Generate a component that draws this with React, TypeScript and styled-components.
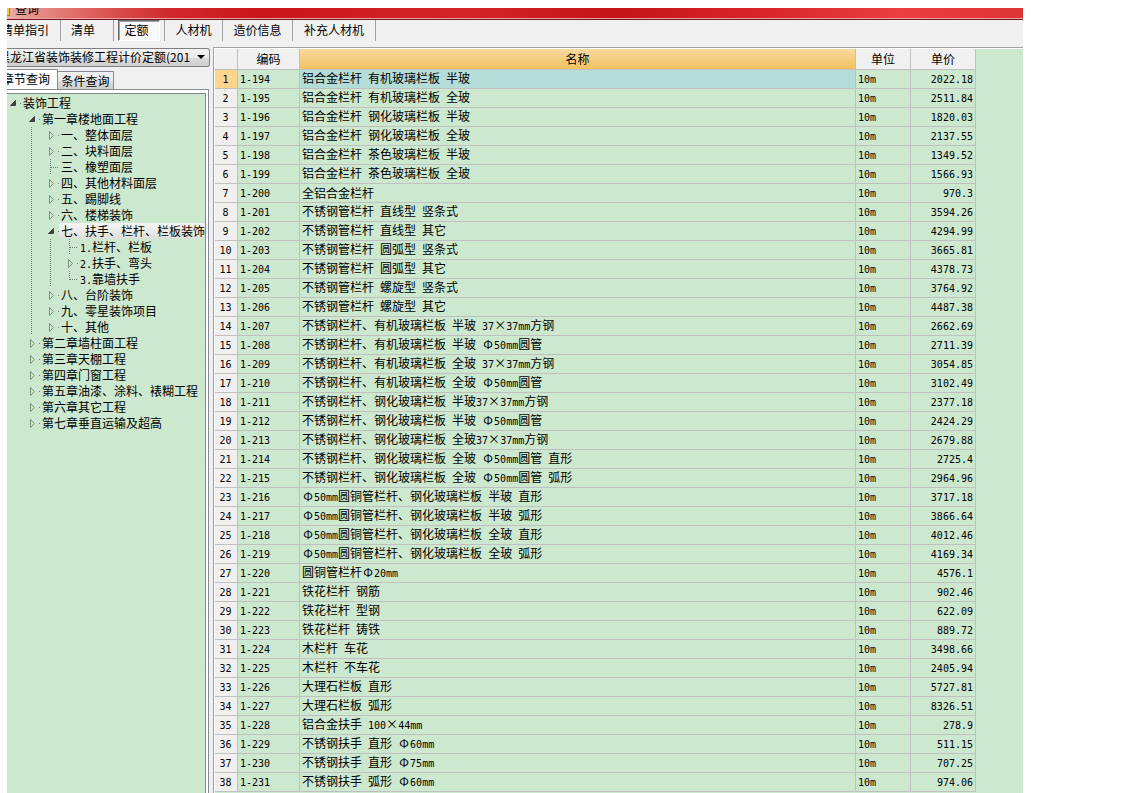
import React from 'react';
import styled, { createGlobalStyle, css } from 'styled-components';

const Global = createGlobalStyle`
  * { box-sizing: border-box; }
  html, body { margin: 0; background: #fff; }
  body, button, select {
    font-family: 'Noto Sans CJK SC', sans-serif;
    font-size: 12px;
    line-height: 16px;
    color: #000;
  }
`;

const Window = styled.div`
  margin: 8px 99px 0 7px;
  height: calc(100vh - 8px);
  min-width: 600px;
  display: flex;
  flex-direction: column;
  overflow: hidden;
  background: #f0f0f0;
`;

const TitleBar = styled.header`
  height: 12px;
  flex: none;
  display: flex;
  align-items: flex-end;
  gap: 5px;
  overflow: hidden;
  background: linear-gradient(90deg, #e8b0a8 0, #e58d86 3%, #dc5a58 9%, #d0282c 16%, #c9161c 25%, #d3242a 45%, #c4141a 60%, #d8262c 75%, #e93f42 88%, #dd3438 100%);
  border-bottom: 1px solid #701820;
  box-shadow: inset 0 -1px #f0a0a0;
`;

const TitleIcon = styled.span`
  width: 3px;
  height: 8px;
  margin-bottom: 3px;
  background: #f5d020;
  border-right: 1px solid #b08010;
  border-bottom: 1px solid #b08010;
`;

const Title = styled.h1`
  margin: 0 0 2px;
  font-size: 12px;
  font-weight: 400;
  line-height: 16px;
`;

const Toolbar = styled.nav`
  height: 27px;
  flex: none;
  display: flex;
  align-items: flex-start;
`;

const ToolCell = styled.div<{ $width: number; $end?: number }>`
  width: ${(p) => p.$width}px;
  height: 21px;
  flex: none;
  display: flex;
  justify-content: ${(p) => (p.$end ? 'flex-end' : 'center')};
  padding-right: ${(p) => p.$end ?? 0}px;
  border-right: 1px solid #a0a0a0;
  overflow: hidden;
`;

const ToolButton = styled.button<{ $active?: boolean }>`
  flex: none;
  height: 21px;
  padding: 0 5px 2px;
  border: 1px solid transparent;
  background: none;
  white-space: nowrap;
  ${(p) =>
    p.$active &&
    css`
      background: #f8f8f8;
      border-color: #696969 #fff #fff #696969;
      box-shadow: inset 1px 1px #a0a0a0;
      padding: 0 10px 2px 5px;
    `}
`;

const Body = styled.div`
  flex: 1;
  min-height: 0;
  display: flex;
`;

const Sidebar = styled.aside`
  width: 206px;
  flex: none;
  display: flex;
  flex-direction: column;
  padding-right: 3px;
`;

const LibraryPicker = styled.div`
  height: 20px;
  flex: none;
  display: grid;
  align-items: center;
  > * { grid-area: 1 / 1; }
  > svg { justify-self: end; margin-right: 5px; pointer-events: none; }
`;

const Select = styled.select`
  appearance: none;
  width: 100%;
  height: 19px;
  padding: 0 16px 0 0;
  text-indent: -9px;
  border: 1px solid #808080;
  border-left: 0;
  border-radius: 0 3px 3px 0;
  background: linear-gradient(#f4f4f4, #ebebeb 50%, #dddddd 50%, #cfcfcf);
`;

const Tabs = styled.div`
  height: 22px;
  flex: none;
  display: flex;
  align-items: flex-end;
`;

const Tab = styled.button<{ $active?: boolean }>`
  height: ${(p) => (p.$active ? 20 : 18)}px;
  width: ${(p) => (p.$active ? 51 : 56)}px;
  flex: none;
  display: flex;
  justify-content: ${(p) => (p.$active ? 'flex-end' : 'center')};
  padding: ${(p) => (p.$active ? '1px 7px 0 0' : '1px 0 0')};
  white-space: nowrap;
  overflow: hidden;
  border: 1px solid #898c95;
  border-bottom: 0;
  border-left-width: 0;
  background: ${(p) => (p.$active ? '#fff' : 'linear-gradient(#f2f2f2, #ebebeb 50%, #dddddd 50%, #cfcfcf)')};
`;

const TreePanel = styled.div`
  flex: 1;
  min-height: 0;
  display: flex;
  margin-right: 1px;
  padding: 3px 2px 0 0;
  background: #fff;
  border-top: 1px solid #898c95;
  border-right: 1px solid #898c95;
`;

const Tree = styled.ul`
  flex: 1;
  min-width: 0;
  margin: 0;
  padding: 1px 0 0;
  list-style: none;
  overflow: hidden;
  background: #cce8cf;
  border-top: 1px solid #828790;
  border-right: 1px solid #828790;
`;

const TreeRow = styled.li`
  height: 16px;
  display: flex;
  align-items: center;
  white-space: nowrap;
`;

const TreeLabel = styled.span<{ $selected?: boolean }>`
  height: 16px;
  padding: 0 2px;
  ${(p) =>
    p.$selected &&
    css`
      flex: 1;
      min-width: 0;
      overflow: hidden;
      border-radius: 2px;
      background: linear-gradient(#f4f6f4, #dcdfdc);
    `}
`;

const Latin = styled.span`
  font-family: 'DejaVu Sans Mono', monospace;
  font-size: 10px;
  line-height: 12px;
  white-space: pre;
`;

const FullWidth = styled.span`
  display: inline-block;
  width: 12px;
  line-height: 12px;
  text-align: center;
`;

const Grid = styled.main`
  flex: 1;
  min-width: 0;
  display: flex;
  overflow: hidden;
  background: #cce8cf;
  border-top: 1px solid #a0a0a0;
  border-left: 1px solid #a0a0a0;
  box-shadow: inset 0 1px #fff, inset 1px 0 #fff;
  padding: 1px 47px 0 1px;
`;

const Table = styled.table`
  width: 100%;
  table-layout: fixed;
  border-collapse: separate;
  border-spacing: 0;
  align-self: flex-start;
`;

const HeadCell = styled.th<{ $active?: boolean }>`
  height: 21px;
  padding: 0;
  font-weight: 400;
  border-right: 1px solid #c0c0c0;
  border-bottom: 1px solid #c0c0c0;
  background: ${(p) => (p.$active ? 'linear-gradient(#f9d9a0, #f1c160)' : '#f0f0f0')};
`;

const RowHead = styled.th<{ $active?: boolean }>`
  height: 19px;
  padding: 0 1px 1px 0;
  font-weight: 400;
  line-height: 14px;
  border-right: 1px solid #c0c0c0;
  border-bottom: 1px solid #c0c0c0;
  background: ${(p) => (p.$active ? '#ffd58d' : '#f0f0f0')};
`;

const Cell = styled.td<{ $active?: boolean; $right?: boolean }>`
  height: 19px;
  padding: 0 2px 1px;
  line-height: 14px;
  text-align: ${(p) => (p.$right ? 'right' : 'left')};
  white-space: nowrap;
  overflow: hidden;
  border-right: 1px solid #c0c0c0;
  border-bottom: 1px solid #c0c0c0;
  background: ${(p) => (p.$active ? '#b4dcd8' : '#cce8cf')};
`;

/* Half-width runs are set in the monospaced face, full-width ones in the CJK face. */
const Mixed = ({ text }: { text: string }) => (
  <>
    {text.split(/([\x20-\x7e]+|Φ)/).map((run, i) => {
      if (run === 'Φ') return <FullWidth key={i}>{run}</FullWidth>;
      return i % 2 ? <Latin key={i}>{run}</Latin> : run;
    })}
  </>
);

type Mark = 'open' | 'closed' | 'leaf' | 'last';

/* depth, marker, label, columns of the guide lines that pass through the row */
const nodes: [number, Mark, string, number[]][] = [
  [0, 'open', '装饰工程', []],
  [1, 'open', '第一章楼地面工程', []],
  [2, 'closed', '一、整体面层', [1]],
  [2, 'closed', '二、块料面层', [1]],
  [2, 'leaf', '三、橡塑面层', [1]],
  [2, 'closed', '四、其他材料面层', [1]],
  [2, 'closed', '五、踢脚线', [1]],
  [2, 'closed', '六、楼梯装饰', [1]],
  [2, 'open', '七、扶手、栏杆、栏板装饰', [1]],
  [3, 'leaf', '1.栏杆、栏板', [1, 2]],
  [3, 'closed', '2.扶手、弯头', [1, 2]],
  [3, 'last', '3.靠墙扶手', [1, 2]],
  [2, 'closed', '八、台阶装饰', [1]],
  [2, 'closed', '九、零星装饰项目', [1]],
  [2, 'closed', '十、其他', [1]],
  [1, 'closed', '第二章墙柱面工程', []],
  [1, 'closed', '第三章天棚工程', []],
  [1, 'closed', '第四章门窗工程', []],
  [1, 'closed', '第五章油漆、涂料、裱糊工程', []],
  [1, 'closed', '第六章其它工程', []],
  [1, 'closed', '第七章垂直运输及超高', []],
];

const Guides = ({ depth, mark, lines }: { depth: number; mark: Mark; lines: number[] }) => {
  const x = depth * 19;
  return (
    <svg width={x + 14} height="16" shapeRendering="crispEdges" aria-hidden="true">
      <g stroke="#6f7f70" strokeDasharray="1 1" fill="none">
        {lines.map((l) => (
          <path key={l} d={`M${l * 19 + 5.5} 0V16`} />
        ))}
        {mark === 'leaf' && <path d={`M${x + 5.5} 0V16M${x + 6} 8.5H${x + 14}`} />}
        {mark === 'last' && <path d={`M${x + 5.5} 0V9M${x + 6} 8.5H${x + 14}`} />}
        {(mark === 'open' || mark === 'closed') && <path d={`M${x + 13} 8.5h1`} />}
      </g>
      <g shapeRendering="auto">
        {mark === 'open' && <path d={`M${x + 8.5} 5.5V10.5H${x + 3.5}Z`} fill="#404040" stroke="#404040" />}
        {mark === 'closed' && <path d={`M${x + 4.5} 4.5V12.5L${x + 8.5} 8.5Z`} fill="none" stroke="#7f8d81" />}
      </g>
    </svg>
  );
};

const rows: [string, string, string][] = [
  ['1-194', '铝合金栏杆 有机玻璃栏板 半玻', '2022.18'],
  ['1-195', '铝合金栏杆 有机玻璃栏板 全玻', '2511.84'],
  ['1-196', '铝合金栏杆 钢化玻璃栏板 半玻', '1820.03'],
  ['1-197', '铝合金栏杆 钢化玻璃栏板 全玻', '2137.55'],
  ['1-198', '铝合金栏杆 茶色玻璃栏板 半玻', '1349.52'],
  ['1-199', '铝合金栏杆 茶色玻璃栏板 全玻', '1566.93'],
  ['1-200', '全铝合金栏杆', '970.3'],
  ['1-201', '不锈钢管栏杆 直线型 竖条式', '3594.26'],
  ['1-202', '不锈钢管栏杆 直线型 其它', '4294.99'],
  ['1-203', '不锈钢管栏杆 圆弧型 竖条式', '3665.81'],
  ['1-204', '不锈钢管栏杆 圆弧型 其它', '4378.73'],
  ['1-205', '不锈钢管栏杆 螺旋型 竖条式', '3764.92'],
  ['1-206', '不锈钢管栏杆 螺旋型 其它', '4487.38'],
  ['1-207', '不锈钢栏杆、有机玻璃栏板 半玻 37×37mm方钢', '2662.69'],
  ['1-208', '不锈钢栏杆、有机玻璃栏板 半玻 Φ50mm圆管', '2711.39'],
  ['1-209', '不锈钢栏杆、有机玻璃栏板 全玻 37×37mm方钢', '3054.85'],
  ['1-210', '不锈钢栏杆、有机玻璃栏板 全玻 Φ50mm圆管', '3102.49'],
  ['1-211', '不锈钢栏杆、钢化玻璃栏板 半玻37×37mm方钢', '2377.18'],
  ['1-212', '不锈钢栏杆、钢化玻璃栏板 半玻 Φ50mm圆管', '2424.29'],
  ['1-213', '不锈钢栏杆、钢化玻璃栏板 全玻37×37mm方钢', '2679.88'],
  ['1-214', '不锈钢栏杆、钢化玻璃栏板 全玻 Φ50mm圆管 直形', '2725.4'],
  ['1-215', '不锈钢栏杆、钢化玻璃栏板 全玻 Φ50mm圆管 弧形', '2964.96'],
  ['1-216', 'Φ50mm圆铜管栏杆、钢化玻璃栏板 半玻 直形', '3717.18'],
  ['1-217', 'Φ50mm圆铜管栏杆、钢化玻璃栏板 半玻 弧形', '3866.64'],
  ['1-218', 'Φ50mm圆铜管栏杆、钢化玻璃栏板 全玻 直形', '4012.46'],
  ['1-219', 'Φ50mm圆铜管栏杆、钢化玻璃栏板 全玻 弧形', '4169.34'],
  ['1-220', '圆铜管栏杆Φ20mm', '4576.1'],
  ['1-221', '铁花栏杆 钢筋', '902.46'],
  ['1-222', '铁花栏杆 型钢', '622.09'],
  ['1-223', '铁花栏杆 铸铁', '889.72'],
  ['1-224', '木栏杆 车花', '3498.66'],
  ['1-225', '木栏杆 不车花', '2405.94'],
  ['1-226', '大理石栏板 直形', '5727.81'],
  ['1-227', '大理石栏板 弧形', '8326.51'],
  ['1-228', '铝合金扶手 100×44mm', '278.9'],
  ['1-229', '不锈钢扶手 直形 Φ60mm', '511.15'],
  ['1-230', '不锈钢扶手 直形 Φ75mm', '707.25'],
  ['1-231', '不锈钢扶手 弧形 Φ60mm', '974.06'],
];

/* name, width of its cell, gap on the right for the items that hug that side */
const tools: [string, number, number?][] = [
  ['清单指引', 54, 5],
  ['清单', 53, 12],
  ['定额', 51],
  ['人材机', 58],
  ['造价信息', 70],
  ['补充人材机', 83],
];

export default function App() {
  return (
    <>
      <Global />
      <Window>
        <TitleBar>
          <TitleIcon />
          <Title>查询</Title>
        </TitleBar>
        <Toolbar>
          {tools.map(([name, width, end]) => (
            <ToolCell key={name} $width={width} $end={end}>
              <ToolButton $active={name === '定额'}>{name}</ToolButton>
            </ToolCell>
          ))}
        </Toolbar>
        <Body>
          <Sidebar>
            <LibraryPicker>
              <Select aria-label="定额库">
                <option>黑龙江省装饰装修工程计价定额(201</option>
              </Select>
              <svg width="8" height="4" aria-hidden="true">
                <path d="M0 0H8L4 4Z" />
              </svg>
            </LibraryPicker>
            <Tabs>
              <Tab $active>章节查询</Tab>
              <Tab>条件查询</Tab>
            </Tabs>
            <TreePanel>
              <Tree>
                {nodes.map(([depth, mark, label, lines]) => (
                  <TreeRow key={label}>
                    <Guides depth={depth} mark={mark} lines={lines} />
                    <TreeLabel $selected={label.startsWith('七')}>
                      <Mixed text={label} />
                    </TreeLabel>
                  </TreeRow>
                ))}
              </Tree>
            </TreePanel>
          </Sidebar>
          <Grid>
            <Table>
              <colgroup>
                <col style={{ width: 23 }} />
                <col style={{ width: 62 }} />
                <col />
                <col style={{ width: 55 }} />
                <col style={{ width: 65 }} />
              </colgroup>
              <thead>
                <tr>
                  <HeadCell />
                  <HeadCell>编码</HeadCell>
                  <HeadCell $active>名称</HeadCell>
                  <HeadCell>单位</HeadCell>
                  <HeadCell>单价</HeadCell>
                </tr>
              </thead>
              <tbody>
                {rows.map(([code, name, price], i) => (
                  <tr key={code}>
                    <RowHead scope="row" $active={i === 0}>
                      <Mixed text={String(i + 1)} />
                    </RowHead>
                    <Cell><Mixed text={code} /></Cell>
                    <Cell $active={i === 0}><Mixed text={name} /></Cell>
                    <Cell><Mixed text="10m" /></Cell>
                    <Cell $right><Mixed text={price} /></Cell>
                  </tr>
                ))}
              </tbody>
            </Table>
          </Grid>
        </Body>
      </Window>
    </>
  );
}
